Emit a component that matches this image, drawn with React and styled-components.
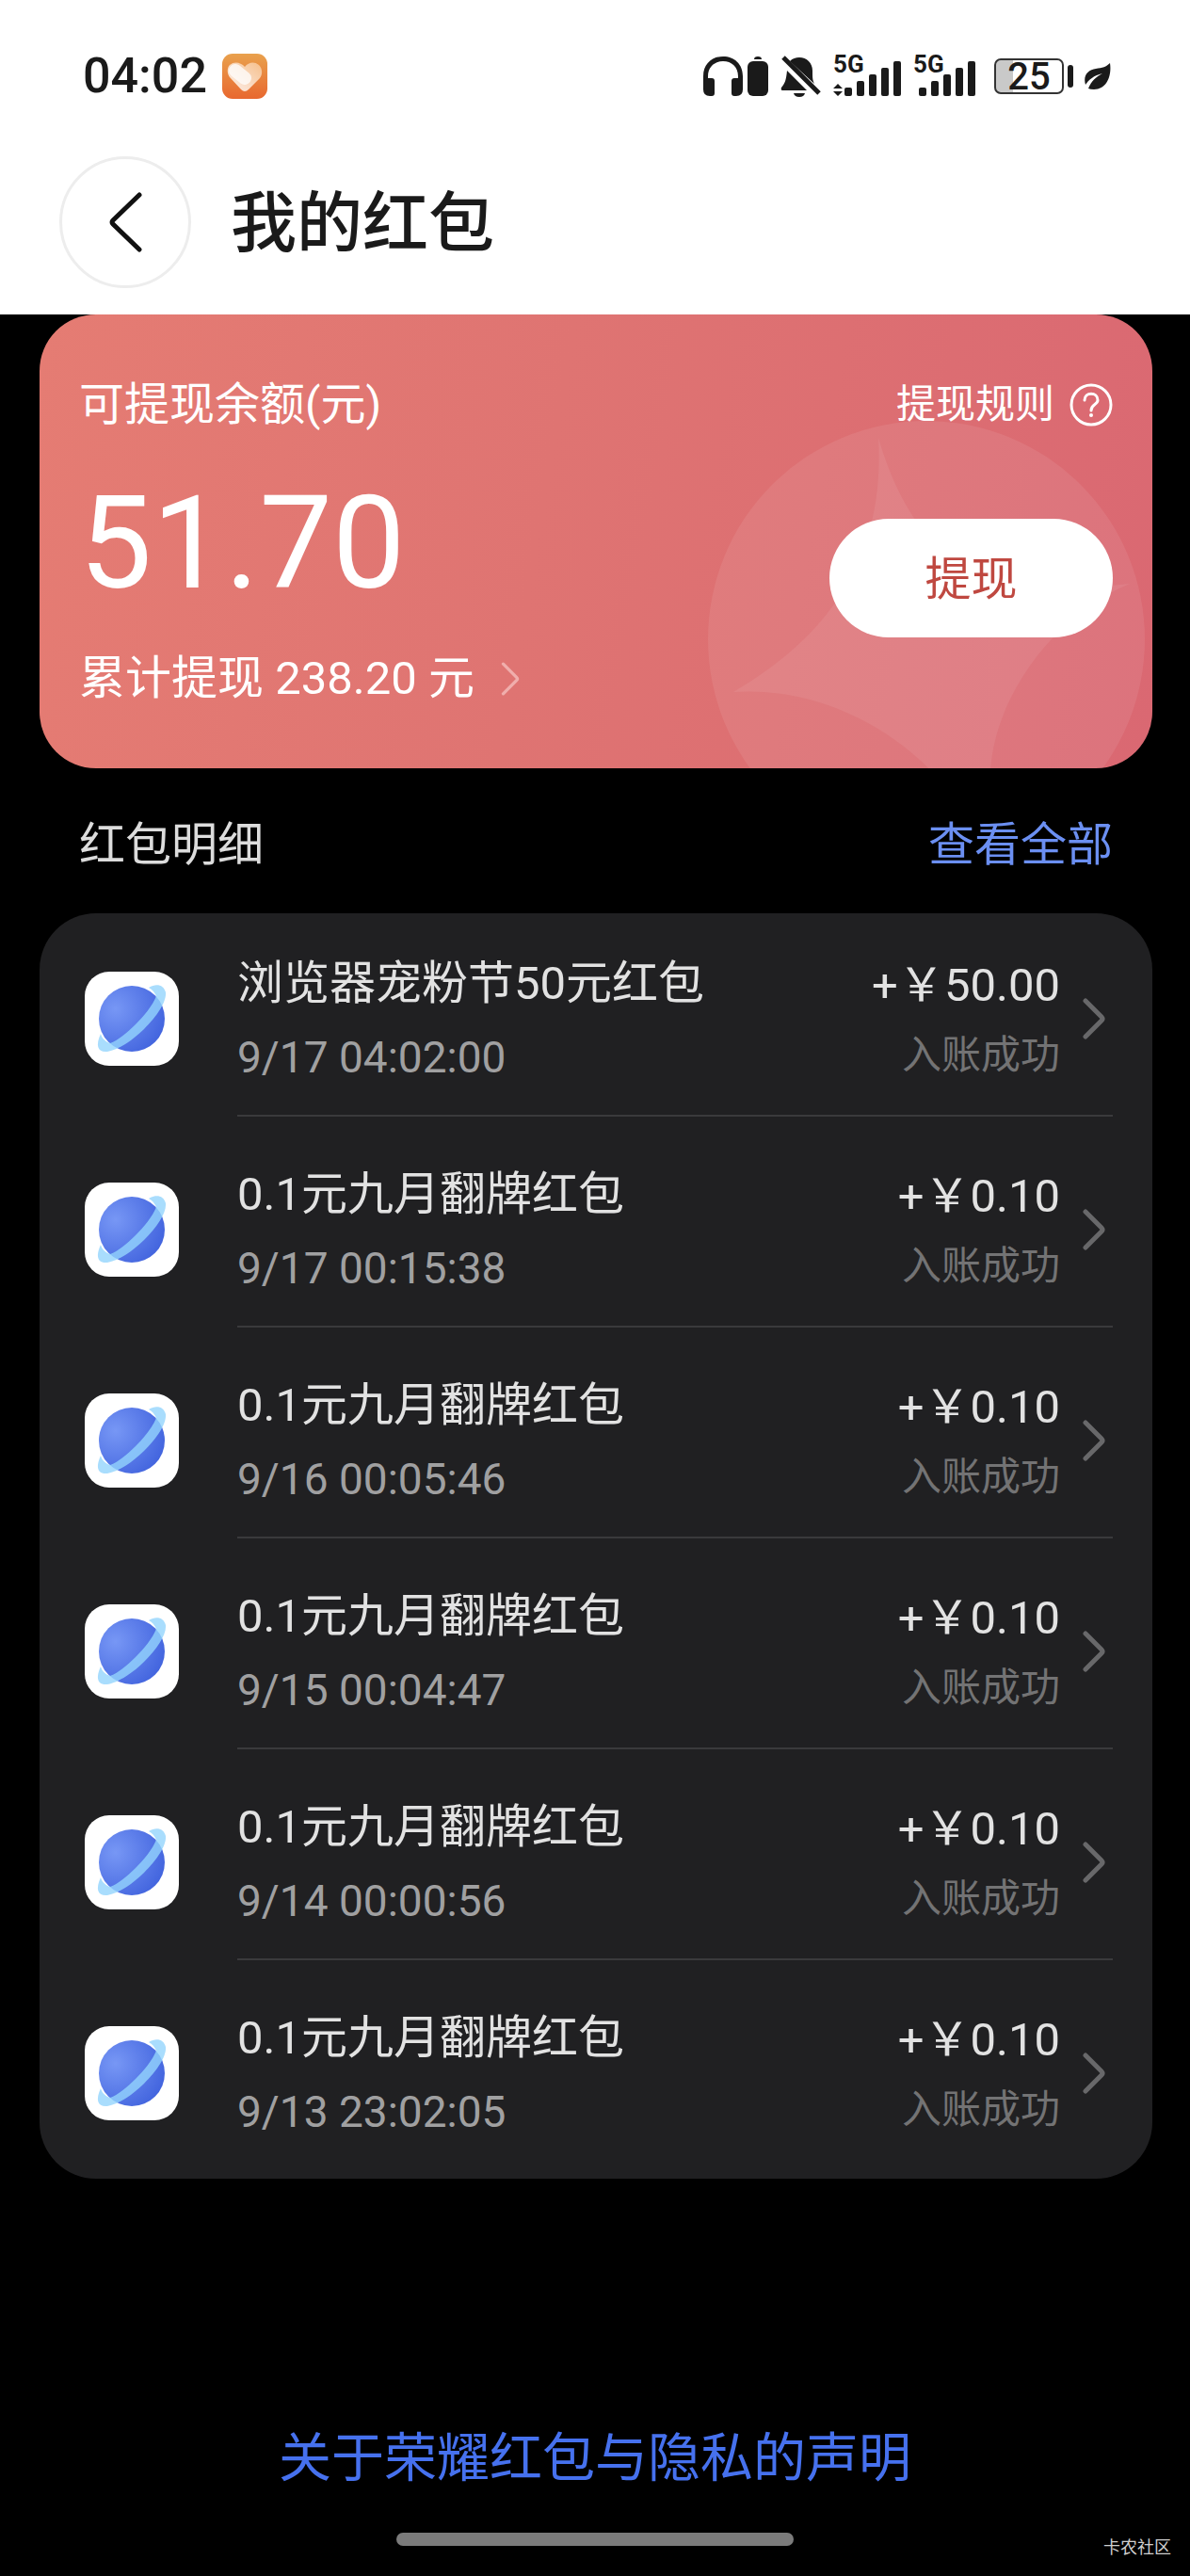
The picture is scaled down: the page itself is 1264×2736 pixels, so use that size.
import styled, { createGlobalStyle } from "styled-components";

const GlobalStyle = createGlobalStyle`
  * {
    box-sizing: border-box;
  }

  body {
    margin: 0;
    background-color: #000;
    font-family: Roboto, "Noto Sans CJK SC", sans-serif;
  }

  a {
    color: inherit;
    text-decoration: none;
  }

  button {
    padding: 0;
    border: none;
    background: none;
    color: inherit;
    font: inherit;
    cursor: pointer;
  }

  svg {
    display: block;
    flex-shrink: 0;
  }
`;

const Page = styled.div`
  position: relative;
  display: flex;
  flex-direction: column;
  min-height: 100vh;
`;

const Header = styled.header`
  background-color: #fff;
  color: #1a1a1a;
`;

// 状态栏
const StatusBar = styled.div`
  display: flex;
  align-items: center;
  justify-content: space-between;
  height: 162px;
  padding: 0 84px 0 88px;
`;

const StatusLeft = styled.div`
  display: flex;
  align-items: center;
  gap: 16px;
`;

const StatusRight = styled.div`
  display: flex;
  align-items: center;
  gap: 12px;
`;

const Time = styled.time`
  font-size: 52px;
  font-weight: 500;
  line-height: 60px;
`;

const SignalText = styled.text`
  font-size: 26px;
  font-weight: 700;
`;

const Battery = styled.div`
  display: flex;
  align-items: center;
  gap: 4px;
  margin-left: 8px;

  &::after {
    content: "";
    width: 6px;
    height: 24px;
    border-radius: 3px;
    background-color: #1a1a1a;
  }
`;

const BatteryBody = styled.div`
  width: 74px;
  height: 38px;
  border: 2px solid #333;
  border-radius: 7px;
  background: linear-gradient(90deg, #c9c9c9 25%, #fff 25%);
  font-size: 40px;
  font-weight: 500;
  line-height: 36px;
  text-align: center;
`;

const NavBar = styled.div`
  display: flex;
  align-items: center;
  gap: 42px;
  padding: 4px 63px 28px;
`;

const BackButton = styled.button`
  display: flex;
  align-items: center;
  justify-content: center;
  width: 140px;
  height: 140px;
  border: 3px solid #ededed;
  border-radius: 50%;
`;

const Title = styled.h1`
  margin: 0;
  padding-top: 4px;
  font-size: 70px;
  font-weight: 500;
  line-height: 84px;
`;

const Main = styled.main`
  padding: 0 40px 0 42px;
`;

// 余额卡片
const BalanceCard = styled.section`
  position: relative;
  overflow: hidden;
  padding: 72px 42px 65px;
  border-radius: 60px;
  background: linear-gradient(100deg, #e57c73 0%, #df7472 45%, #da6872 100%);
  color: #fff;
`;

const CardPattern = styled.svg`
  position: absolute;
  right: 8px;
  bottom: -95px;
`;

const CardTop = styled.div`
  position: relative;
  display: flex;
  align-items: center;
  justify-content: space-between;
  margin-bottom: 53px;
`;

const CardLabel = styled.span`
  font-size: 48px;
  line-height: 48px;
`;

const RulesButton = styled.button`
  display: flex;
  align-items: center;
  gap: 16px;
  font-size: 42px;
  line-height: 48px;
`;

const CardBody = styled.div`
  position: relative;
  display: flex;
  align-items: flex-start;
  justify-content: space-between;
`;

const Balance = styled.div`
  font-size: 138px;
  line-height: 140px;
`;

const TotalLink = styled.a`
  display: flex;
  align-items: center;
  gap: 28px;
  margin-top: 44px;
  font-size: 49px;
  line-height: 60px;
`;

const WithdrawButton = styled.button`
  width: 301px;
  height: 126px;
  margin-top: 44px;
  padding-bottom: 8px;
  border-radius: 63px;
  background-color: #fff;
  color: #bf4840;
  font-size: 49px;
`;

const SectionHead = styled.div`
  display: flex;
  align-items: center;
  justify-content: space-between;
  padding: 52px 42px 42px;
  font-size: 49px;
  line-height: 60px;
`;

const SectionTitle = styled.h2`
  margin: 0;
  color: #dcdcdc;
  font-size: inherit;
  font-weight: 400;
`;

const ViewAll = styled.a`
  color: #6b8ff2;
`;

// 红包明细列表
const RecordList = styled.ul`
  margin: 0;
  padding: 0;
  border-radius: 60px;
  background-color: #202022;
  list-style: none;
`;

const RecordLink = styled.a`
  display: flex;
  align-items: center;
  gap: 62px;
  padding: 0 42px 0 48px;
`;

const RecordBody = styled.div`
  display: flex;
  flex: 1;
  align-items: center;
  min-height: 216px;
  margin-bottom: 8px;
  padding: 10px 8px 0 0;
  border-bottom: 2px solid ${({ $last }) => ($last ? "transparent" : "#3a3a3c")};
`;

const RecordInfo = styled.div`
  display: flex;
  flex: 1;
  flex-direction: column;
  gap: 22px;
`;

const RecordAmount = styled.div`
  display: flex;
  flex-direction: column;
  align-items: flex-end;
  gap: 18px;
  margin-right: 24px;
`;

const MainText = styled.span`
  color: #e2e2e2;
  font-size: 49px;
  line-height: 60px;
`;

const DateText = styled.time`
  color: #a0a0a1;
  font-size: 46px;
  line-height: 52px;
`;

const StatusText = styled.span`
  color: #737374;
  font-size: 42px;
  line-height: 52px;
`;

const Footer = styled.footer`
  display: flex;
  flex-direction: column;
  align-items: center;
  gap: 39px;
  margin-top: auto;
  padding: 60px 0 32px;
`;

const PrivacyLink = styled.a`
  color: #4671ee;
  font-size: 56px;
  line-height: 80px;
`;

const HomeBar = styled.div`
  width: 422px;
  height: 14px;
  border-radius: 7px;
  background-color: #7b7b7b;
`;

const Watermark = styled.span`
  position: absolute;
  right: 20px;
  bottom: 18px;
  color: #cfcfcf;
  font-size: 18px;
  line-height: 24px;
`;

const HeartIcon = () => (
  <svg width="48" height="48" viewBox="0 0 48 48">
    <defs>
      <linearGradient id="heartBg" x1="0" y1="0" x2="0" y2="1">
        <stop offset="0" stopColor="#e9a14d" />
        <stop offset="1" stopColor="#e8682f" />
      </linearGradient>
      <linearGradient id="heartFill" x1="0" y1="1" x2="1" y2="0">
        <stop offset="0.3" stopColor="#fdeee2" />
        <stop offset="1" stopColor="#f7c493" />
      </linearGradient>
    </defs>
    <rect width="48" height="48" rx="11" fill="url(#heartBg)" />
    <path
      d="M24 14 C28 9 34 8 39 12 C43 16 43 22 40 26 L28 38 Q24 42 20 38 L8 25 C5 21 5 15 8 12 C13 8 19 9 24 14Z"
      fill="url(#heartFill)"
      opacity="0.9"
    />
    <path d="M14 18 L24 26" stroke="#fff" strokeWidth="14" strokeLinecap="round" opacity="0.75" />
  </svg>
);

const HeadphonesIcon = () => (
  <svg width="70" height="44" viewBox="0 0 70 44" fill="#1a1a1a">
    <path d="M0 22 C0 9 9 1 21 1 S42 9 42 22 V36 Q42 43 35 43 H33 Q30 43 30 40 V27 Q30 24 33 24 H37 V22 C37 12 30 6 21 6 S5 12 5 22 V24 H9 Q12 24 12 27 V40 Q12 43 9 43 H7 Q0 43 0 36Z" />
    <path d="M54 4 Q54 1 58 1 T62 4Z" />
    <rect x="47" y="6" width="22" height="37" rx="6" />
  </svg>
);

const MutedIcon = () => (
  <svg width="44" height="46" viewBox="0 0 44 46" fill="#1a1a1a">
    <path d="M10 7 C13 4 16 3 20 3 C28 3 34 9 34 17 C34 24 34 27 36 31Z" />
    <path d="M7 17 L28 38 H2 Q0 38 1 35 C5 30 6 27 7 17Z" />
    <path d="M14 41 H26 Q25 45 20 45 T14 41Z" />
    <path d="M3 3 L41 41" stroke="#1a1a1a" strokeWidth="5" />
  </svg>
);

const SignalIcon = ({ data }) => (
  <svg
    width={data ? 72 : 67}
    height="68"
    viewBox={data ? "0 -12 72 68" : "5 -12 67 68"}
    fill="#1a1a1a"
  >
    <SignalText x={data ? 0 : 6} y="18">
      5G
    </SignalText>
    {data && <path d="M5 30 L10 35 H0Z M0 38 H10 L5 43Z" />}
    <rect x="12" y="34" width="8" height="9" rx="2" />
    <rect x="25" y="27" width="8" height="16" rx="2" />
    <rect x="38" y="20" width="8" height="23" rx="2" />
    <rect x="51" y="13" width="8" height="30" rx="2" />
    <rect x="64" y="6" width="8" height="37" rx="2" />
  </svg>
);

const LeafIcon = () => (
  <svg width="28" height="30" viewBox="0 0 28 30" fill="#1a1a1a">
    <path d="M27 1 C29 14 24 29 10 29 Q6 29 4 28 C7 20 12 16 19 12 C10 14 4 19 1 24 C-2 14 4 8 12 7 C19 6 23 5 27 1Z" />
  </svg>
);

const Chevron = ({ width, height, color, stroke }) => (
  <svg width={width} height={height} viewBox="0 0 24 44" fill="none">
    <path
      d="M3 3 L20 20 Q22 22 20 24 L3 41"
      stroke={color}
      strokeWidth={stroke}
      strokeLinecap="round"
    />
  </svg>
);

const BackIcon = () => (
  <svg width="36" height="66" viewBox="0 0 36 66" fill="none">
    <path d="M33 4 L5 31 Q3 33 5 35 L33 62" stroke="#111" strokeWidth="5" strokeLinecap="round" />
  </svg>
);

const HelpIcon = () => (
  <svg width="46" height="46" viewBox="0 0 46 46" fill="none" stroke="#fff" strokeWidth="3">
    <circle cx="23" cy="23" r="21" />
    <path d="M16 18 C16 9 30 9 30 18 C30 23 23 22 23 29" strokeLinecap="round" />
    <circle cx="23" cy="34" r="2" fill="#fff" stroke="none" />
  </svg>
);

const PlanetIcon = () => (
  <svg width="100" height="100" viewBox="0 0 100 100">
    <defs>
      <radialGradient id="planet" cx="0.25" cy="0.35" r="0.8">
        <stop offset="0" stopColor="#7797f5" />
        <stop offset="1" stopColor="#4264de" />
      </radialGradient>
    </defs>
    <rect width="100" height="100" rx="26" fill="#fff" />
    <circle cx="50" cy="50" r="35" fill="url(#planet)" />
    <path
      d="M68 17 C76 12 84 14 86 22 C87 32 77 47 63 61 C52 72 36 83 24 85 C14 86 11 79 17 66 C18 70 21 74 27 76 C35 73 45 65 54 56 C63 47 72 36 76 26 C74 22 72 19 68 17Z"
      fill="#94d4fc"
      opacity="0.8"
    />
  </svg>
);

const records = [
  { title: "浏览器宠粉节50元红包", date: "9/17 04:02:00", amount: "50.00" },
  { title: "0.1元九月翻牌红包", date: "9/17 00:15:38", amount: "0.10" },
  { title: "0.1元九月翻牌红包", date: "9/16 00:05:46", amount: "0.10" },
  { title: "0.1元九月翻牌红包", date: "9/15 00:04:47", amount: "0.10" },
  { title: "0.1元九月翻牌红包", date: "9/14 00:00:56", amount: "0.10" },
  { title: "0.1元九月翻牌红包", date: "9/13 23:02:05", amount: "0.10" },
];

const Record = ({ record, last }) => {
  return (
    <li>
      <RecordLink href="#record">
        <PlanetIcon />
        <RecordBody $last={last}>
          <RecordInfo>
            <MainText>{record.title}</MainText>
            <DateText>{record.date}</DateText>
          </RecordInfo>
          <RecordAmount>
            <MainText>+￥{record.amount}</MainText>
            <StatusText>入账成功</StatusText>
          </RecordAmount>
          <Chevron width={24} height={44} color="#68686a" stroke={5} />
        </RecordBody>
      </RecordLink>
    </li>
  );
};

const App = () => {
  return (
    <Page>
      <GlobalStyle />
      <Header>
        <StatusBar>
          <StatusLeft>
            <Time>04:02</Time>
            <HeartIcon />
          </StatusLeft>
          <StatusRight>
            <HeadphonesIcon />
            <MutedIcon />
            <SignalIcon data />
            <SignalIcon />
            <Battery>
              <BatteryBody>25</BatteryBody>
            </Battery>
            <LeafIcon />
          </StatusRight>
        </StatusBar>
        <NavBar>
          <BackButton type="button" aria-label="返回">
            <BackIcon />
          </BackButton>
          <Title>我的红包</Title>
        </NavBar>
      </Header>

      <Main>
        <BalanceCard>
          <CardPattern width="464" height="464" viewBox="0 0 464 464" fill="#fff">
            <circle cx="232" cy="232" r="232" opacity="0.08" />
            <path
              d="M181 18 C202 90 240 150 300 166 C350 180 400 178 448 173 C370 205 305 290 300 372 C298 400 296 430 292 455 C255 360 145 280 27 288 C100 245 190 170 181 18Z"
              opacity="0.07"
            />
          </CardPattern>
          <CardTop>
            <CardLabel>可提现余额(元)</CardLabel>
            <RulesButton type="button">
              提现规则
              <HelpIcon />
            </RulesButton>
          </CardTop>
          <CardBody>
            <div>
              <Balance>51.70</Balance>
              <TotalLink href="#total">
                累计提现 238.20 元
                <Chevron width={20} height={38} color="#f0aeac" stroke={4} />
              </TotalLink>
            </div>
            <WithdrawButton type="button">提现</WithdrawButton>
          </CardBody>
        </BalanceCard>

        <SectionHead>
          <SectionTitle>红包明细</SectionTitle>
          <ViewAll href="#all">查看全部</ViewAll>
        </SectionHead>

        <RecordList>
          {records.map((record, index) => (
            <Record key={record.date} record={record} last={index === records.length - 1} />
          ))}
        </RecordList>
      </Main>

      <Footer>
        <PrivacyLink href="#privacy">关于荣耀红包与隐私的声明</PrivacyLink>
        <HomeBar />
      </Footer>
      <Watermark>卡农社区</Watermark>
    </Page>
  );
};

export default App;
